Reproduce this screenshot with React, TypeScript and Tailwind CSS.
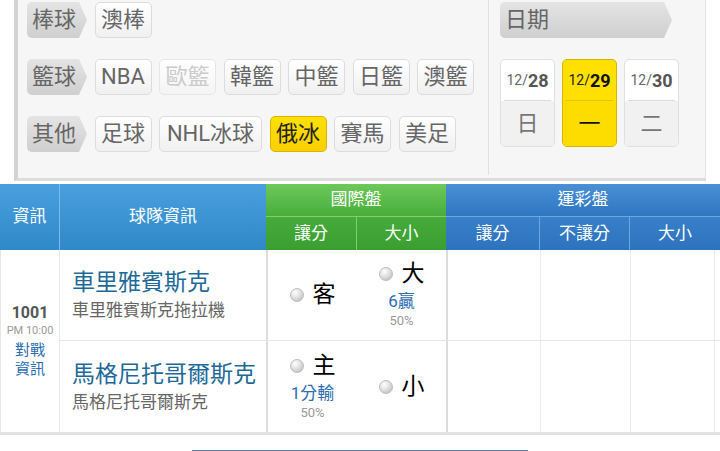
import React from "react";

const font = { fontFamily: 'Roboto, "Noto Sans CJK TC", "Noto Sans", sans-serif' };

function Tag({ children, w }: { children: React.ReactNode; w: string }) {
  return (
    <div
      className={`${w} h-[36px] shrink-0 rounded-l-[5px] bg-linear-to-b from-[#e4e4e4] to-[#cfcfcf] text-[22px] leading-[36px] text-[#666] pl-[5px] [clip-path:polygon(0_0,calc(100%-8px)_0,100%_50%,calc(100%-8px)_100%,0_100%)]`}
    >
      {children}
    </div>
  );
}

function Btn({ children, kind, wide }: { children: React.ReactNode; kind?: "off" | "on"; wide?: boolean }) {
  const base = `${wide ? "w-[103px]" : "w-[57px]"} h-[36px] shrink-0 rounded-[5px] border text-center text-[22px] leading-[34px] whitespace-nowrap`;
  if (kind === "on")
    return (
      <div className={`${base} border-[#d8b400] bg-linear-to-b from-[#ffe000] to-[#fad100] text-[#222]`}>
        {children}
      </div>
    );
  if (kind === "off")
    return (
      <div className={`${base} border-[#e6e6e6] bg-linear-to-b from-[#ffffff] to-[#f4f4f4] text-[#cbcbcb]`}>
        {children}
      </div>
    );
  return (
    <div className={`${base} border-[#dcdcdc] bg-linear-to-b from-[#ffffff] to-[#f0f0f0] text-[#666]`}>
      {children}
    </div>
  );
}

function DateCard({ d, w, on }: { d: string; w: string; on?: boolean }) {
  return (
    <div
      className={`w-[55px] h-[88px] shrink-0 rounded-[5px] border flex flex-col overflow-hidden ${
        on ? "border-[#d8b400] bg-[#ffe000]" : "border-[#e0e0e0] bg-white"
      }`}
    >
      <div className="h-[40px] flex items-center justify-center">
        <span className={`text-[14px] ${on ? "text-[#222]" : "text-[#666]"}`}>12/</span>
        <span className={`text-[18px] font-bold ${on ? "text-[#111]" : "text-[#555]"}`}>{d}</span>
      </div>
      <div className={`mx-[3px] h-px ${on ? "bg-[#e6c400]" : "bg-[#dcdcdc]"}`} />
      <div
        className={`flex-1 flex items-center justify-center text-[22px] ${
          on ? "bg-[#fddc00] text-[#111]" : "bg-[#f1f1f1] text-[#777]"
        }`}
      >
        {w}
      </div>
    </div>
  );
}

function Radio() {
  return (
    <span className="inline-block w-[14px] h-[14px] rounded-full border border-[#bdbdbd] bg-[radial-gradient(circle_at_35%_30%,#ffffff_0%,#e4e4e4_40%,#b4b4b4_100%)]" />
  );
}

function Pick({ label, odds, pct }: { label: string; odds?: string; pct?: string }) {
  return (
    <div className="flex flex-col items-center">
      <div className="flex items-center gap-[9px]">
        <Radio />
        <span className="text-[23px] leading-[28px] text-black">{label}</span>
      </div>
      {odds && <div className="text-[17px] leading-[22px] text-[#2c6cb2] mt-[2px]">{odds}</div>}
      {pct && <div className="text-[13px] leading-[18px] text-[#9a9a9a]">{pct}</div>}
    </div>
  );
}

function Row({
  name,
  sub,
  a,
  b,
  last,
}: {
  name: string;
  sub: string;
  a: React.ReactNode;
  b: React.ReactNode;
  last?: boolean;
}) {
  return (
    <div className={`flex h-[91px] ${last ? "" : "border-b border-[#e6e6e6]"}`}>
      <div className="w-[206px] pl-[12px] flex flex-col justify-center">
        <div className="text-[23px] leading-[30px] text-[#1d6a99] whitespace-nowrap">{name}</div>
        <div className="text-[17px] leading-[24px] text-[#666] whitespace-nowrap">{sub}</div>
      </div>
      <div className="w-[91px] border-l-2 border-[#dcdcdc] flex items-center justify-center">{a}</div>
      <div className="w-[89px] flex items-center justify-center">{b}</div>
      <div className="w-[94px] border-l-2 border-[#dcdcdc]" />
      <div className="w-[90px] border-l border-[#ebebeb]" />
      <div className="w-[85px] border-l border-r border-[#ebebeb]" />
    </div>
  );
}

export default function App() {
  return (
    <div className="w-[720px] h-[451px] overflow-hidden bg-white relative" style={font}>
      {/* Filter panel */}
      <div className="ml-[14px] w-[692px] h-[181px] flex bg-[#f6f6f6] border-l-4 border-l-[#d3d3d3] border-b-[3px] border-b-[#dcdcdc] border-r border-r-[#e4e4e4]">
        <div className="w-[470px] pl-[9px] pt-[2px] flex flex-col gap-[21px]">
          <div className="flex items-center gap-[7.5px]">
            <Tag w="w-[60px]">棒球</Tag>
            <Btn>澳棒</Btn>
          </div>
          <div className="flex items-center gap-[7.5px]">
            <Tag w="w-[60px]">籃球</Tag>
            <Btn>NBA</Btn>
            <Btn kind="off">歐籃</Btn>
            <Btn>韓籃</Btn>
            <Btn>中籃</Btn>
            <Btn>日籃</Btn>
            <Btn>澳籃</Btn>
          </div>
          <div className="flex items-center gap-[7.5px]">
            <Tag w="w-[60px]">其他</Tag>
            <Btn>足球</Btn>
            <Btn wide>NHL冰球</Btn>
            <Btn kind="on">俄冰</Btn>
            <Btn>賽馬</Btn>
            <Btn>美足</Btn>
          </div>
        </div>
        <div className="w-px h-[175px] bg-[#e0e0e0]" />
        <div className="pl-[11px] pt-[2px] flex flex-col gap-[21px]">
          <Tag w="w-[172px]">日期</Tag>
          <div className="flex gap-[7px]">
            <DateCard d="28" w="日" />
            <DateCard d="29" w="一" on />
            <DateCard d="30" w="二" />
          </div>
        </div>
      </div>

      {/* Table */}
      <div className="mt-[3px] w-[720px]">
        <div className="flex h-[66px] text-white text-[17px]">
          <div className="w-[60px] border-r border-[#7cbbe8] bg-linear-to-b from-[#4aa0de] to-[#2f88c8] flex items-center justify-center">
            資訊
          </div>
          <div className="w-[206px] bg-linear-to-b from-[#4aa0de] to-[#2f88c8] flex items-center justify-center">
            球隊資訊
          </div>
          <div className="w-[180px] flex flex-col">
            <div className="h-[33px] bg-linear-to-b from-[#6cc95a] to-[#47ad3b] flex items-center justify-center border-b border-[#7fcf70]">
              國際盤
            </div>
            <div className="flex-1 flex bg-linear-to-b from-[#45ab3a] to-[#3a9f30]">
              <div className="w-[91px] border-r border-[#7fcf70] flex items-center justify-center">讓分</div>
              <div className="flex-1 flex items-center justify-center">大小</div>
            </div>
          </div>
          <div className="flex-1 flex flex-col">
            <div className="h-[33px] bg-linear-to-b from-[#4990d6] to-[#2f76c2] flex items-center justify-center border-b border-[#6ea6de]">
              運彩盤
            </div>
            <div className="flex-1 flex bg-linear-to-b from-[#3880c9] to-[#2d72bd]">
              <div className="w-[94px] border-r border-[#6ea6de] flex items-center justify-center">讓分</div>
              <div className="w-[90px] border-r border-[#6ea6de] flex items-center justify-center">不讓分</div>
              <div className="flex-1 flex items-center justify-center">大小</div>
            </div>
          </div>
        </div>

        <div className="flex border-b-[3px] border-[#e2e2e2]">
          <div className="w-[60px] border-l border-r border-[#e6e6e6] flex flex-col items-center justify-center">
            <div className="text-[16px] leading-[20px] font-bold text-[#555]">1001</div>
            <div className="text-[11px] leading-[16px] text-[#9a9a9a]">PM 10:00</div>
            <div className="text-[15px] leading-[19px] text-[#2a6cb0] mt-[2px]">對戰</div>
            <div className="text-[15px] leading-[19px] text-[#2a6cb0]">資訊</div>
          </div>
          <div className="flex-1 flex flex-col">
            <Row
              name="車里雅賓斯克"
              sub="車里雅賓斯克拖拉機"
              a={<Pick label="客" />}
              b={<Pick label="大" odds="6贏" pct="50%" />}
            />
            <Row
              name="馬格尼托哥爾斯克"
              sub="馬格尼托哥爾斯克"
              a={<Pick label="主" odds="1分輸" pct="50%" />}
              b={<Pick label="小" />}
              last
            />
          </div>
        </div>

        <div className="mt-[15px] ml-[192px] w-[336px] h-[10px] border-t border-[#4f7fb0] bg-[#f8f8f8]" />
      </div>
    </div>
  );
}
